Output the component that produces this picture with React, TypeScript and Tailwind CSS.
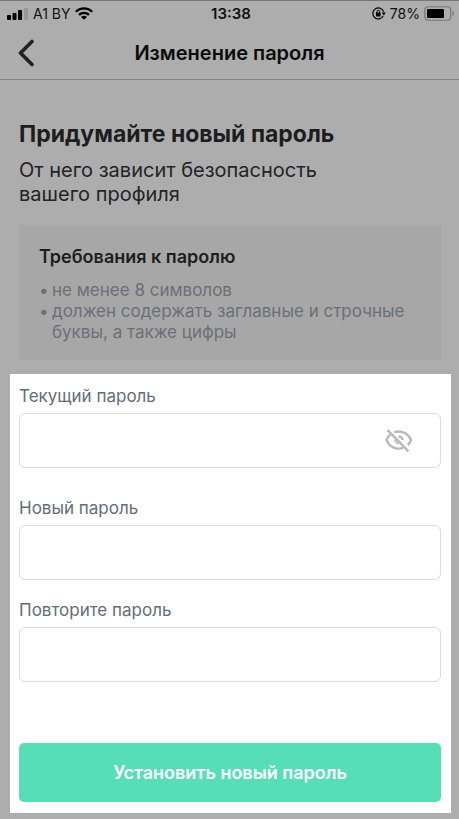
const SignalIcon = () => (
  <svg width="21" height="12" viewBox="0 0 21 12" aria-hidden="true">
    <rect x="0" y="7" width="4" height="5" rx="1" />
    <rect x="5.5" y="5" width="4" height="7" rx="1" />
    <rect x="11" y="2" width="4" height="10" rx="1" />
    <rect x="17" y="0" width="4" height="12" rx="1" fill="#989898" />
  </svg>
);

const WifiIcon = () => (
  <svg width="18" height="13" viewBox="0 0 18 13" aria-hidden="true">
    <g fill="none" stroke="#000" strokeWidth="2.3">
      <path d="M0.9 4.7C5.4 0.2 12.6 0.2 17.1 4.7" />
      <path d="M4 7.9C6.9 5.1 11.1 5.1 14 7.9" />
    </g>
    <path d="M9 12.8L6 9.9C7.7 8.4 10.3 8.4 12 9.9Z" />
  </svg>
);

const RotationLockIcon = () => (
  <svg width="14" height="13" viewBox="0 0 14 13" aria-hidden="true">
    <g fill="none" stroke="#000" strokeWidth="1.2">
      <path d="M11.2 9A5.5 5.5 0 1 1 11.6 4.8" />
      <path d="M4.9 6V4.7a1.4 1.4 0 0 1 2.8 0V6" strokeWidth="1" />
    </g>
    <rect x="4" y="5.6" width="4.6" height="3.8" rx="0.6" />
    <path d="M9.8 5.6H13.8L11.8 8.4Z" />
  </svg>
);

const BatteryIcon = () => (
  <svg width="31" height="15" viewBox="0 0 31 15" aria-hidden="true">
    <rect x="0.75" y="0.75" width="26" height="13.5" rx="3.5" fill="none" stroke="#777" strokeWidth="1.2" />
    <rect x="3" y="3" width="17" height="9" rx="1.2" />
    <path d="M28.5 5v5c1.8-0.8 1.8-4.2 0-5Z" fill="#777" />
  </svg>
);

const EyeOffIcon = () => (
  <svg width="28" height="24" viewBox="0 0 28 24" fill="none" stroke="#b9b9b9" strokeWidth="2.4" aria-hidden="true">
    <path d="M9.2 3.2C15.5 1.4 23 3.4 26 11C25.3 13 24.2 14.7 22.8 16" />
    <path d="M5.6 5.2C3.6 6.7 2.3 8.7 1.6 11C4.5 18.6 12 21 18.2 18.9" />
    <path d="M13.4 7.6C15.8 7.2 17.8 8.8 17.5 11.2" />
    <path d="M10.2 10.6C10 12.8 11.6 14.4 13.6 14.4" strokeWidth="1.6" />
    <path d="M2.6 1.2L23.4 22.4" strokeWidth="2.6" />
  </svg>
);

const inputClass =
  "block w-full h-[55px] px-4 text-lg text-gray-900 bg-white border border-[#d9dbdd] rounded-md outline-none focus:border-[#57deb6]";

const labelClass = "block mb-[5px] text-[17px] leading-6 text-[#636d78]";

const StatusBar = () => (
  <div className="grid grid-cols-[1fr_auto_1fr] items-center h-[25px] pl-[7px] pr-1 text-sm text-[#111]">
    <div className="flex items-center gap-[5px]">
      <SignalIcon />
      <span>A1 BY</span>
      <WifiIcon />
    </div>
    <div className="text-[15px] font-semibold">13:38</div>
    <div className="flex items-center justify-end gap-1">
      <RotationLockIcon />
      <span>78%</span>
      <BatteryIcon />
    </div>
  </div>
);

const App = () => {
  return (
    <div className="min-h-screen pb-[6px] bg-[#adadad] border-t border-[#777] font-['Inter','Liberation_Sans',sans-serif]">
      <StatusBar />

      <header className="grid grid-cols-[1fr_auto_1fr] items-center h-[54px] px-4 border-b border-[#858585]">
        <button type="button" aria-label="Назад" className="w-6">
          <svg width="20" height="28" viewBox="0 0 20 28" fill="none" aria-hidden="true">
            <path
              d="M16 2.5L4.5 14L16 25.5"
              stroke="#222"
              strokeWidth="3.6"
              strokeLinecap="round"
              strokeLinejoin="round"
            />
          </svg>
        </button>
        <h1 className="text-xl font-semibold text-[#0a0a0a]">Изменение пароля</h1>
      </header>

      <main>
        <section className="pt-[38px] pl-[19px] pr-[18px]">
          <h2 className="text-[23px] leading-8 font-bold text-[#1c1d1e]">Придумайте новый пароль</h2>
          <p className="mt-2 text-[20px] leading-6 text-[#222426]">
            От него зависит безопасность
            <br />
            вашего профиля
          </p>

          <div className="mt-[19px] px-5 pt-5 pb-[17px] bg-[#a7a7a7]">
            <h3 className="text-lg leading-6 font-semibold text-[#1c1d1e]">Требования к паролю</h3>
            <ul className="mt-[11px] text-[17px] leading-[21px] text-[#6a7077]">
              <li className="flex">
                <span className="w-[13px] shrink-0">•</span>
                <span>не менее 8 символов</span>
              </li>
              <li className="flex">
                <span className="w-[13px] shrink-0">•</span>
                <span>должен содержать заглавные и строчные буквы, а также цифры</span>
              </li>
            </ul>
          </div>
        </section>

        <form className="mt-[14px] ml-[10px] mr-2 pt-[10px] pb-[11px] pl-[9px] pr-[10px] bg-white">
          <label htmlFor="current" className={labelClass}>
            Текущий пароль
          </label>
          <div className="relative">
            <input id="current" type="password" className={inputClass} />
            <button
              type="button"
              aria-label="Показать пароль"
              className="absolute inset-y-0 right-7 flex items-center"
            >
              <EyeOffIcon />
            </button>
          </div>

          <div className="mt-7">
            <label htmlFor="new" className={labelClass}>
              Новый пароль
            </label>
            <input id="new" type="password" className={inputClass} />
          </div>

          <div className="mt-[18px]">
            <label htmlFor="repeat" className={labelClass}>
              Повторите пароль
            </label>
            <input id="repeat" type="password" className={inputClass} />
          </div>

          <button
            type="submit"
            className="block w-full h-[59px] mt-[61px] text-lg font-semibold text-white bg-[#57deb6] rounded-[5px]"
          >
            Установить новый пароль
          </button>
        </form>
      </main>
    </div>
  );
};

export default App;
